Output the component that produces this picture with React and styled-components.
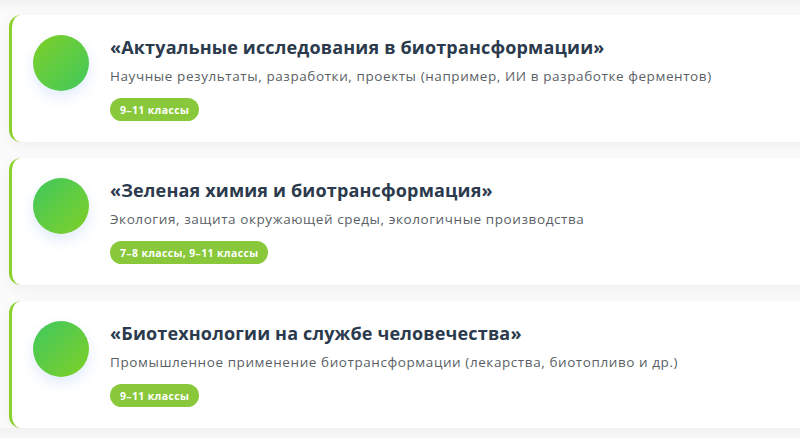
import React from "react";
import styled, { createGlobalStyle } from "styled-components";

const GlobalStyle = createGlobalStyle`
  html, body {
    margin: 0;
    padding: 0;
    overflow: hidden;
  }
  body {
    background: linear-gradient(#f1f1f1 0, #f6f6f6 6px, #fbfbfb 12px, #fbfbfb 100%);
    font-family: "Open Sans", "Noto Sans", sans-serif;
  }
`;

const topics = [
  {
    title: "«Актуальные исследования в биотрансформации»",
    text: "Научные результаты, разработки, проекты (например, ИИ в разработке ферментов)",
    grades: "9–11 классы",
    flip: false,
  },
  {
    title: "«Зеленая химия и биотрансформация»",
    text: "Экология, защита окружающей среды, экологичные производства",
    grades: "7–8 классы, 9–11 классы",
    flip: true,
  },
  {
    title: "«Биотехнологии на службе человечества»",
    text: "Промышленное применение биотрансформации (лекарства, биотопливо и др.)",
    grades: "9–11 классы",
    flip: true,
  },
];

const TopicList = () => {
  return (
    <List>
      {topics.map((item) => (
        <Card key={item.title}>
          <Dot $flip={item.flip} />
          <Body>
            <Title>{item.title}</Title>
            <Text>{item.text}</Text>
            <Badge>{item.grades}</Badge>
          </Body>
        </Card>
      ))}
    </List>
  );
};

const App = () => (
  <>
    <GlobalStyle />
    <TopicList />
  </>
);

const List = styled.div`
  display: flex;
  flex-direction: column;
  gap: 16px;
  padding: 15px 0 0 9px;
  margin-right: -40px;
`;

const Card = styled.div`
  display: flex;
  align-items: flex-start;
  gap: 21px;
  height: 127px;
  box-sizing: border-box;
  padding: 20px 20px 20px 21px;
  background: #ffffff;
  border-left: 3px solid #8bd02b;
  border-radius: 12px;
  box-shadow: 0 4px 14px rgba(0, 0, 0, 0.05);
`;

const Dot = styled.div`
  flex: 0 0 56px;
  width: 56px;
  height: 56px;
  border-radius: 50%;
  background: ${(p) =>
    p.$flip
      ? "linear-gradient(135deg, #3fc95e 0%, #80cf27 100%)"
      : "linear-gradient(135deg, #80cf27 0%, #3fc95e 100%)"};
  box-shadow: 0 6px 14px rgba(60, 130, 230, 0.16);
`;

const Body = styled.div`
  display: flex;
  flex-direction: column;
  align-items: flex-start;
`;

const Title = styled.div`
  font-family: "Open Sans", sans-serif;
  font-weight: 700;
  font-size: 18px;
  line-height: 24px;
  letter-spacing: 0.16px;
  color: #2b3a4c;
  white-space: nowrap;
`;

const Text = styled.div`
  margin-top: 8px;
  font-size: 13.5px;
  line-height: 18px;
  letter-spacing: 0.58px;
  color: #5a5f66;
  white-space: nowrap;
`;

const Badge = styled.span`
  margin-top: 13px;
  display: inline-flex;
  align-items: center;
  height: 23px;
  padding: 0 10px;
  border-radius: 12px;
  background: #88c83a;
  color: #ffffff;
  font-size: 10.5px;
  font-weight: 700;
  letter-spacing: 0.35px;
  white-space: nowrap;
`;

export default App;
